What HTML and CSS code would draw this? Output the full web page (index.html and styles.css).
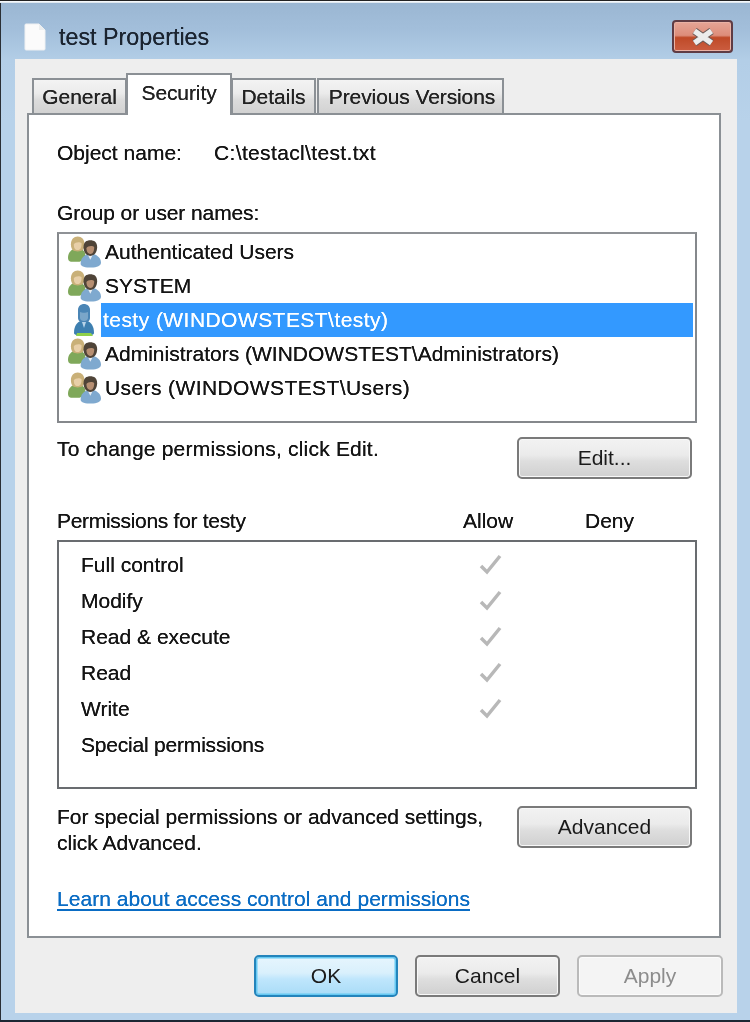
FILE: index.html
```html
<!DOCTYPE html>
<html lang="en">
<head>
<meta charset="utf-8">
<title>test Properties</title>
<link rel="stylesheet" href="styles.css">
</head>
<body>
<svg class="defs" width="0" height="0" aria-hidden="true">
  <defs>
    <symbol id="group" viewBox="0 0 34 32">
      <path d="M0 22c0-5 3-8 6-9h7c3 1 5 3 5 7v3l-6 3H3c-2 0-3-2-3-4z" fill="#7fa85a"/>
      <path d="M3 8c0-5 3-8 7-8s7 3 7 8c0 3-1 5-2 6-2 2-8 2-10 0-1-1-2-3-2-6z" fill="#c9b078"/>
      <path d="M6 8c1-2 6-3 8-1 0 4-1 7-4 7S6 12 6 8z" fill="#e8cfa8"/>
      <path d="M13 28c0-6 4-9 8-10h5c4 1 8 4 8 9 0 3-4 5-10 5S13 31 13 28z" fill="#7fa9cf"/>
      <path d="M20 18h6l-3 6z" fill="#e8eef4"/>
      <path d="M16 11c0-5 3-7 7-7s7 2 7 7-3 9-7 9-7-4-7-9z" fill="#4f4438"/>
      <path d="M19 12c1-2 6-3 8-1 0 3-1 7-4 7S19 15 19 12z" fill="#b78f72"/>
    </symbol>
    <symbol id="user" viewBox="0 0 22 32">
      <path d="M1 29c0-7 3-11 7-12h6c4 1 7 5 7 12 0 2-4 3-10 3S1 31 1 29z" fill="#3d7fb0"/>
      <path d="M4 29h14l2 3H3z" fill="#8fd04a"/>
      <path d="M5 6c0-4 3-6 6-6s6 2 6 6v8c0 3-3 5-6 5s-6-2-6-5z" fill="#4a85b5"/>
      <path d="M7 8c2 1 6 1 8 0v6c0 2-2 3-4 3s-4-1-4-3z" fill="#7aa6c9"/>
      <path d="M9 18h4l-2 6z" fill="#b7d3e8"/>
    </symbol>
    <symbol id="check" viewBox="0 0 24 24">
      <path d="M2 13l6 6L21 3" fill="none" stroke="#b8b8b8" stroke-width="3.500"/>
    </symbol>
  </defs>
</svg>
<div class="window">
  <header class="titlebar">
    <div class="title-group">
      <svg class="file-icon" viewBox="0 0 22 28" aria-hidden="true"><path d="M1 2a1 1 0 0 1 1-1h13l6 6v19a1 1 0 0 1-1 1H2a1 1 0 0 1-1-1z" fill="#fbfbfb" stroke="#eef0f2"/><path d="M15 1v6h6z" fill="#eceeef"/></svg>
      <h1 class="title">test Properties</h1>
    </div>
    <div class="close">
      <svg viewBox="0 0 24 18" class="close-x" aria-hidden="true"><path d="M3.500 3l17 12M20.500 3l-17 12" fill="none" stroke="#6a5a58" stroke-width="7.500"/><path d="M3.500 3l17 12M20.500 3l-17 12" fill="none" stroke="#ececec" stroke-width="5.500"/></svg>
    </div>
  </header>
  <main class="panel">
    <nav class="tabs">
      <div class="tab tab-general">General</div>
      <div class="tab tab-security active">Security</div>
      <div class="tab tab-details">Details</div>
      <div class="tab tab-versions">Previous Versions</div>
    </nav>
    <section class="page">
      <div class="object-row"><span class="object-label">Object name:</span><span class="object-path">C:\testacl\test.txt</span></div>
      <div class="label label-group">Group or user names:</div>
      <div class="listbox">
        <div class="user-row"><span class="icon-cell"><svg class="icon-group"><use href="#group"/></svg></span><span class="user-name">Authenticated Users</span></div>
        <div class="user-row"><span class="icon-cell"><svg class="icon-group"><use href="#group"/></svg></span><span class="user-name">SYSTEM</span></div>
        <div class="user-row"><span class="icon-cell icon-cell-user"><svg class="icon-user"><use href="#user"/></svg></span><span class="user-name selected">testy (WINDOWSTEST\testy)</span></div>
        <div class="user-row"><span class="icon-cell"><svg class="icon-group"><use href="#group"/></svg></span><span class="user-name">Administrators (WINDOWSTEST\Administrators)</span></div>
        <div class="user-row"><span class="icon-cell"><svg class="icon-group"><use href="#group"/></svg></span><span class="user-name user-name-users">Users (WINDOWSTEST\Users)</span></div>
      </div>
      <div class="action-row edit-row"><span class="edit-note">To change permissions, click Edit.</span><button class="btn action-btn edit-btn" type="button">Edit...</button></div>
      <div class="perm-head"><span class="perm-title">Permissions for testy</span><span class="perm-col perm-allow">Allow</span><span class="perm-col perm-deny">Deny</span></div>
      <div class="permbox">
        <div class="perm-row"><span class="perm-name">Full control</span><svg class="check"><use href="#check"/></svg></div>
        <div class="perm-row"><span class="perm-name">Modify</span><svg class="check"><use href="#check"/></svg></div>
        <div class="perm-row"><span class="perm-name">Read &amp; execute</span><svg class="check"><use href="#check"/></svg></div>
        <div class="perm-row"><span class="perm-name">Read</span><svg class="check"><use href="#check"/></svg></div>
        <div class="perm-row"><span class="perm-name">Write</span><svg class="check"><use href="#check"/></svg></div>
        <div class="perm-row"><span class="perm-name perm-special">Special permissions</span></div>
      </div>
      <div class="action-row advanced-row"><span>For special permissions or advanced settings,<br>click Advanced.</span><button class="btn action-btn advanced-btn" type="button">Advanced</button></div>
      <a class="learn" href="#">Learn about access control and permissions</a>
    </section>
    <footer class="footer">
      <button class="btn btn-ok" type="button">OK</button>
      <button class="btn btn-cancel" type="button">Cancel</button>
      <button class="btn btn-apply" type="button" disabled>Apply</button>
    </footer>
  </main>
</div>
</body>
</html>
```
FILE: styles.css
```css
* { box-sizing: border-box; }
html, body { margin: 0; padding: 0; }
body {
  width: 750px;
  height: 1022px;
  overflow: hidden;
  background: #b8d2ea;
  font-family: "Liberation Sans", Arial, sans-serif;
  font-size: 21px;
  line-height: 26px;
  color: #141414;
  text-shadow: 0 0 0.6px currentColor;
}
.defs { position: absolute; }
.window {
  width: 750px;
  height: 1022px;
  padding: 0 13px 0 15px;
  display: flex;
  flex-direction: column;
  background: linear-gradient(180deg, #9ab6d2 0, #a3bfdb 30px, #b3cee7 60px, #b8d2ea 120px);
  border-top: 1px solid #222;
  border-bottom: 2px solid #1c2733;
  box-shadow: inset 0 1px 0 #f4f8fb, inset 0 2px 0 #dfe8f0, inset 1px 0 0 #2a2f35;
  filter: blur(0.35px);
}
.titlebar {
  height: 58px;
  flex: none;
  display: flex;
  align-items: flex-start;
  justify-content: space-between;
}
.title-group { display: flex; align-items: center; margin: 21px 0 0 9px; }
.file-icon { width: 22px; height: 28px; display: block; }
.title {
  margin: 0 0 0 13px;
  font-size: 23.300px;
  line-height: 30px;
  font-weight: 400;
  color: #1b2430;
}
.close {
  width: 61px;
  height: 33px;
  margin: 19px 4px 0 0;
  display: flex;
  align-items: center;
  justify-content: center;
  border: 2px solid #5f3c44;
  border-radius: 4px;
  background: linear-gradient(180deg, #e5a596 0, #dd8d7a 46%, #bf4a28 54%, #cb5d40 100%);
  box-shadow: inset 0 0 0 1px #e9b2a5;
}
.close-x { width: 24px; height: 18px; display: block; }
.panel {
  flex: 1;
  width: 722px;
  padding: 14px 14px 0 12px;
  background: #eeeeee;
  margin-bottom: 7px;
}
.tabs { display: flex; padding-left: 5px; height: 42px; margin-bottom: -2px; align-items: flex-end; position: relative; }
.tab {
  height: 35px;
  margin-bottom: 2px;
  border: 2px solid #8b9095;
  border-bottom: 0;
  background: linear-gradient(180deg, #f3f3f3 0, #ebebeb 40%, #dcdcdc 60%, #d2d2d2 100%);
  text-align: center;
  line-height: 34px;
  color: #222;
  white-space: nowrap;
}
.tab-general { width: 95px; }
.tab-security { width: 106px; }
.tab-details { width: 85px; margin-right: 1px; }
.tab-versions { width: 187px; letter-spacing: -0.1px; padding-left: 3px; }
.tab.active {
  height: 42px;
  margin: 0 -1px 0 -1px;
  background: #fff;
  line-height: 36px;
  position: relative;
  z-index: 1;
  letter-spacing: -0.1px;
}
.page {
  width: 694px;
  height: 825px;
  padding: 25px 22px 0 28px;
  background: #fff;
  border: 2px solid #8b9095;
}
.object-row { display: flex; }
.object-label { width: 157px; }
.object-path { letter-spacing: 0.35px; }
.label-group { margin-top: 34px; letter-spacing: -0.1px; }
.listbox {
  height: 191px;
  margin-top: 6px;
  padding: 1px 2px 0;
  border: 2px solid #85888c;
  border-top-color: #8f9296;
}
.user-row { display: flex; height: 34px; align-items: center; }
.icon-cell { width: 40px; height: 34px; padding: 0 0 0 7px; flex: none; display: flex; align-items: center; }
.icon-cell-user { padding-left: 12px; }
.icon-group { width: 34px; height: 32px; display: block; }
.icon-user { width: 22px; height: 32px; display: block; }
.user-name { flex: 1; height: 34px; line-height: 34px; padding-left: 4px; white-space: nowrap; }
.user-name.selected { background: #3399ff; color: #fff; padding-left: 2px; letter-spacing: 0.45px; }
.user-name-users { letter-spacing: 0.4px; }
.action-row { display: flex; justify-content: space-between; align-items: flex-start; }
.edit-row { margin-top: 13px; }
.edit-note { letter-spacing: 0.2px; }
.edit-btn { margin-top: 1px; }
.btn {
  height: 42px;
  padding: 0;
  border: 2px solid #7a7a7a;
  border-radius: 5px;
  font: inherit;
  color: #1a1a1a;
  background: linear-gradient(180deg, #f2f2f2 0, #ebebeb 42%, #dedede 58%, #d0d0d0 100%);
  box-shadow: inset 0 0 0 1px #f8f8f8;
}
.action-btn { width: 175px; margin-right: 5px; }
.perm-head { display: flex; margin-top: 29px; }
.perm-title { width: 406px; letter-spacing: -0.3px; }
.perm-col { text-align: left; }
.perm-allow { width: 122px; }
.permbox {
  height: 249px;
  margin-top: 6px;
  padding: 5px 0 0 22px;
  border: 2px solid #696c70;
}
.perm-row { display: flex; height: 36px; align-items: center; }
.perm-name { width: 398px; }
.perm-special { letter-spacing: -0.2px; }
.check { width: 24px; height: 24px; display: block; }
.advanced-row { margin-top: 15px; }
.advanced-btn { margin-top: 2px; }
.learn {
  display: block;
  margin-top: 30px;
  color: #0a6cc4;
  text-decoration: underline;
  text-decoration-skip-ink: none;
  text-underline-offset: 3px;
  letter-spacing: 0.05px;
  white-space: nowrap;
}
.footer { display: flex; justify-content: flex-end; gap: 17px; margin-top: 17px; }
.btn-ok {
  width: 144px;
  border-color: #2484bb;
  background: linear-gradient(180deg, #e6f5fd 0, #d9f0fc 42%, #bfe6fc 58%, #a9dcf7 100%);
  box-shadow: inset 0 0 0 1.5px #66c9f2;
}
.btn-cancel { width: 145px; }
.btn-apply {
  width: 146px;
  border-color: #bababa;
  background: #f4f4f4;
  color: #8c8c8c;
  box-shadow: inset 0 0 0 1px #fbfbfb;
}
```
